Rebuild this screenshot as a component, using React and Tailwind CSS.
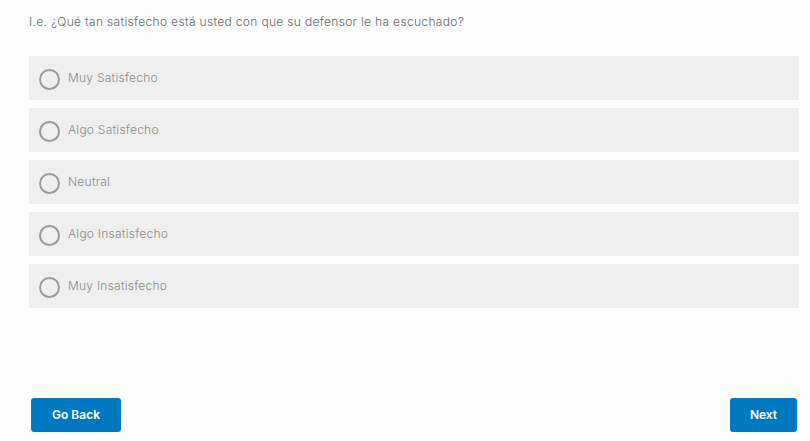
import React, { useState } from 'react';

const options = ['Muy Satisfecho', 'Algo Satisfecho', 'Neutral', 'Algo Insatisfecho', 'Muy Insatisfecho'];

function App() {
  const [selected, setSelected] = useState(null);

  return (
    <div
      className="h-[441px] w-[810px] bg-[#fdfdfd] flex flex-col pl-[29px] pr-[11px]"
      style={{ fontFamily: 'Inter, "Open Sans", sans-serif' }}
    >
      {/* Question */}
      <p className="mt-[13px] text-[12px] leading-[18px] font-light tracking-[0.33px] text-[#666666]">
        I.e. ¿Qué tan satisfecho está usted con que su defensor le ha escuchado?
      </p>

      {/* Options */}
      <div className="mt-[25px] flex flex-col gap-2">
        {options.map((opt, i) => (
          <label
            key={opt}
            onClick={() => setSelected(i)}
            className="h-[44px] bg-[#efefef] flex items-center pl-[10px] cursor-pointer"
          >
            <span className="w-[21px] h-[21px] rounded-full border-2 border-[#9a9a9a] flex items-center justify-center mt-[2px]">
              {selected === i && <span className="w-[11px] h-[11px] rounded-full bg-[#0079c1]" />}
            </span>
            <span className="ml-[8px] text-[12px] font-light tracking-[0.25px] text-[#8a8a8a] -mt-[1px]">{opt}</span>
          </label>
        ))}
      </div>

      {/* Buttons */}
      <div className="mt-auto mb-[9px] flex justify-between px-[2px]">
        <button className="w-[90px] h-[34px] rounded-[3px] bg-[#0079c1] text-white text-[12px] font-semibold">
          Go Back
        </button>
        <button className="w-[67px] h-[34px] rounded-[3px] bg-[#0079c1] text-white text-[12px] font-semibold">
          Next
        </button>
      </div>
    </div>
  );
}

export default App;
